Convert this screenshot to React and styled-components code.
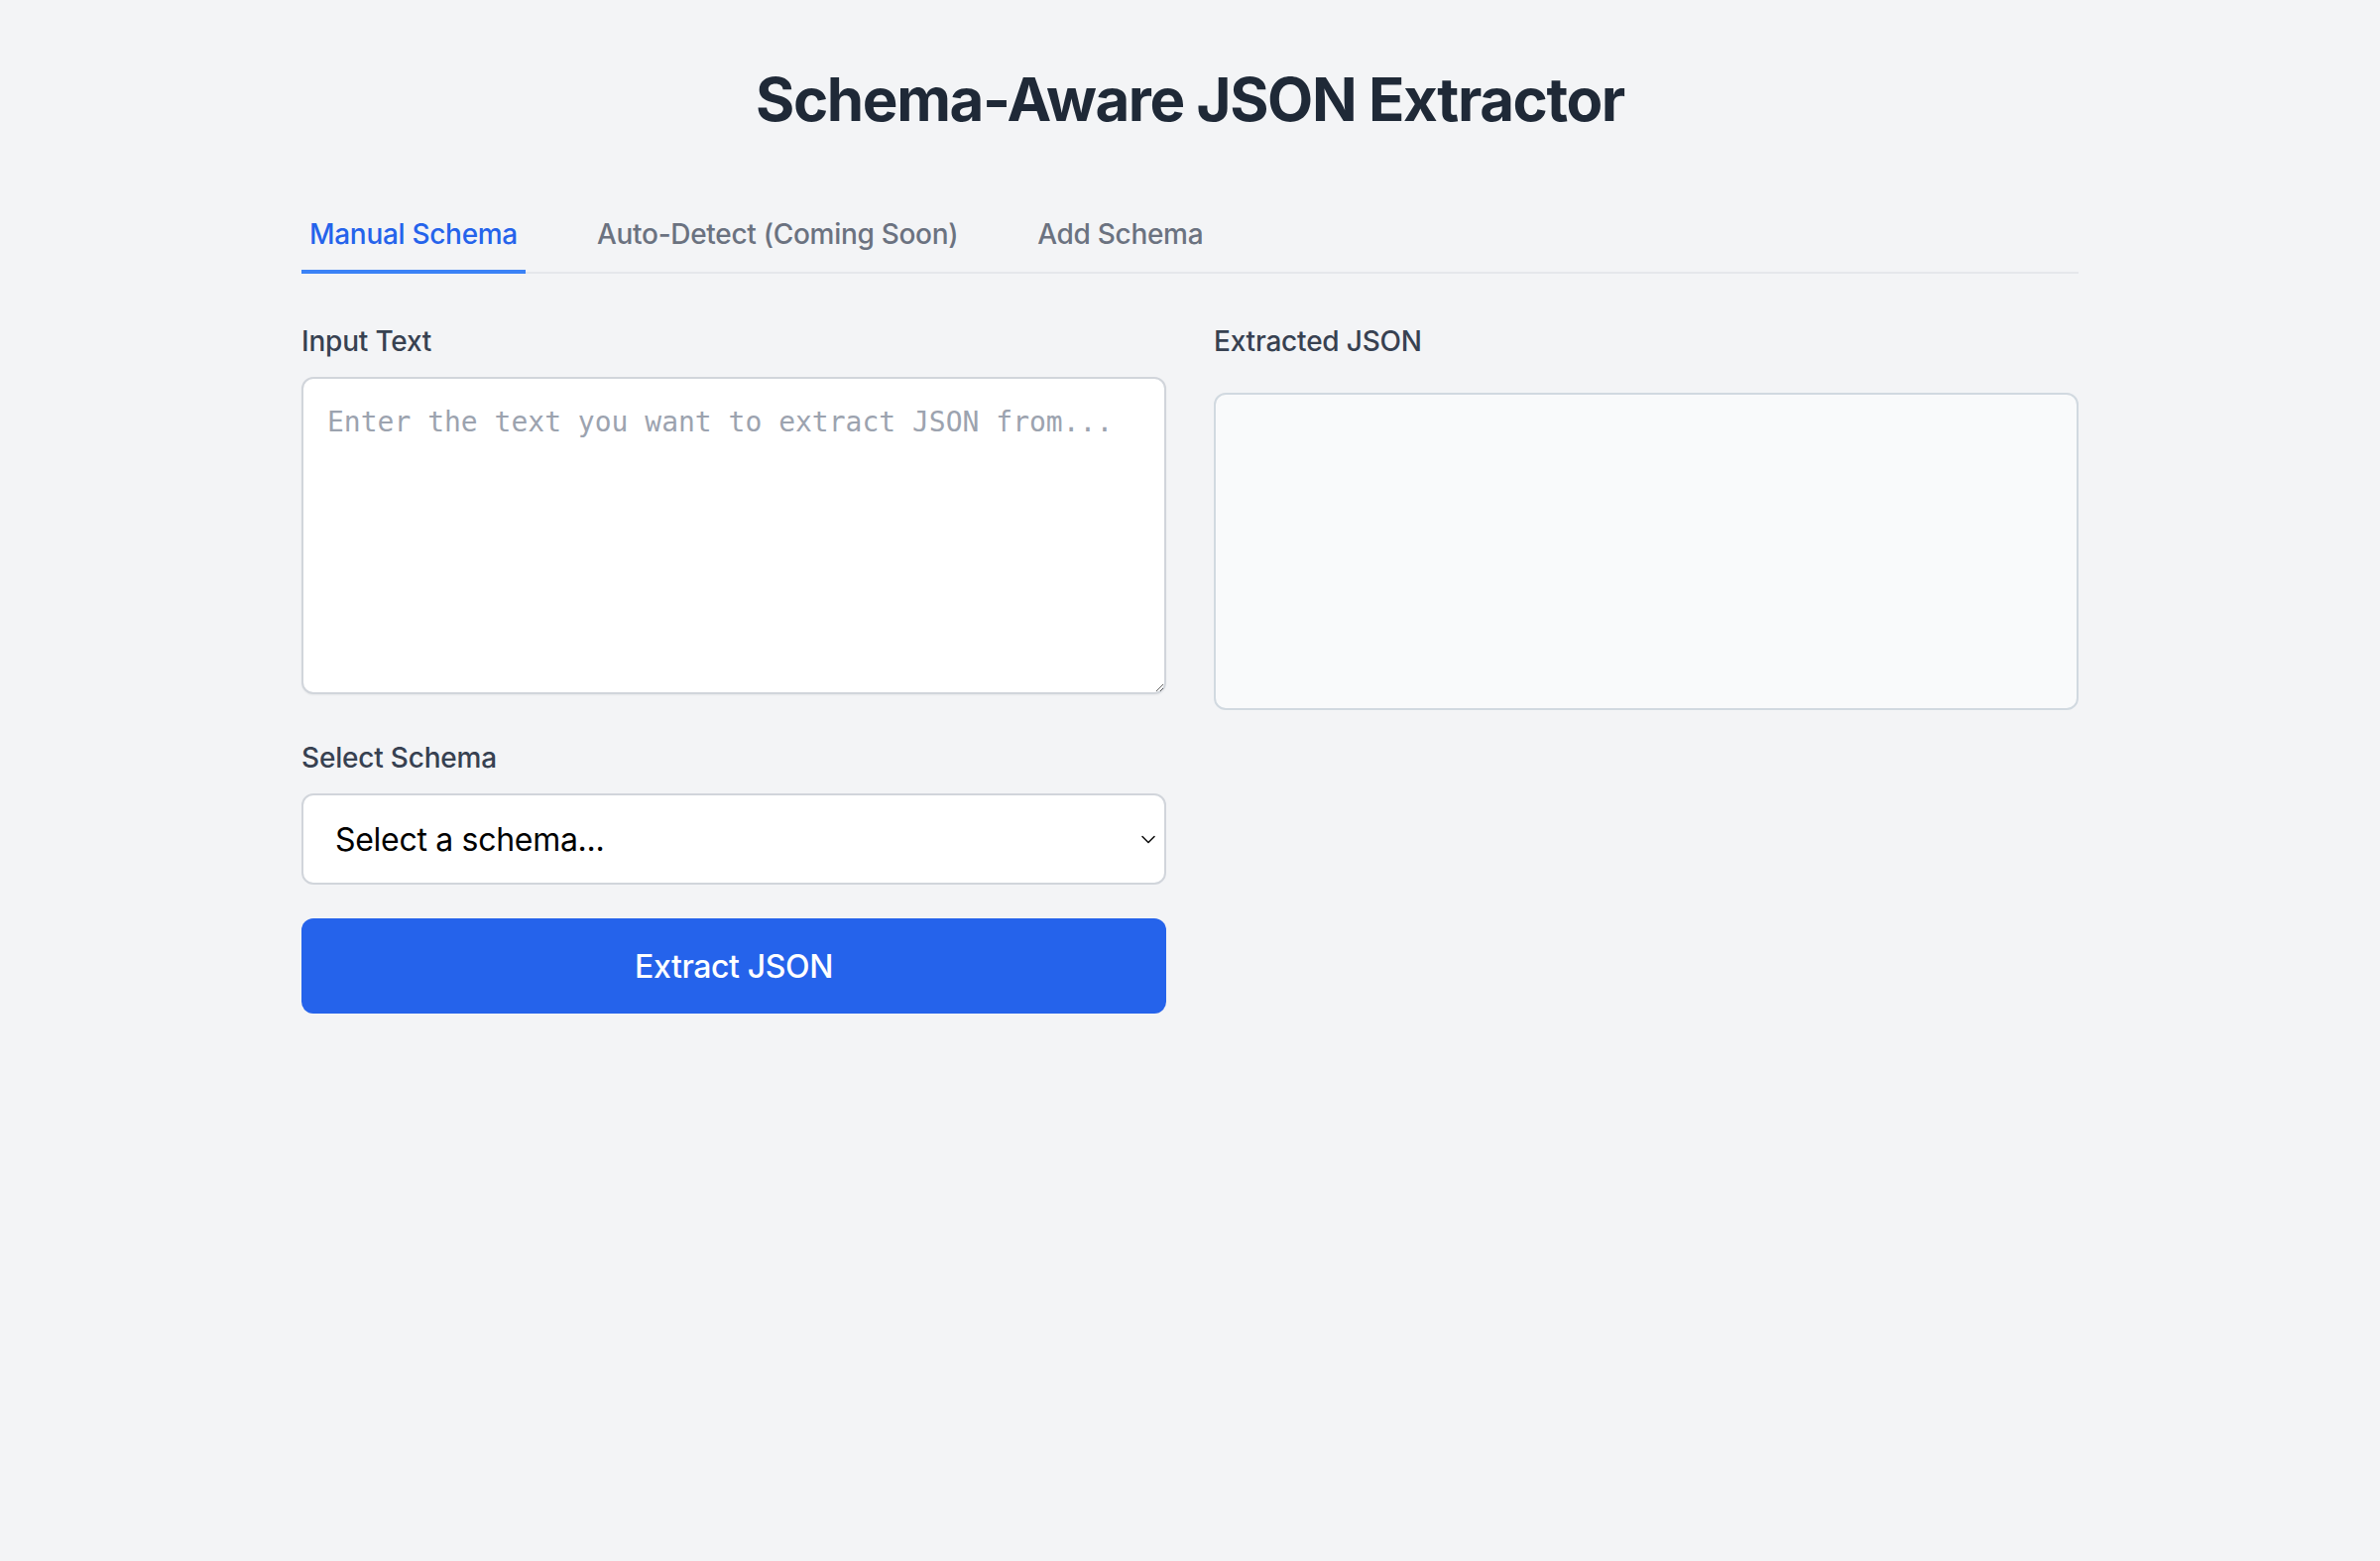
import React, { useState } from "react";
import styled, { createGlobalStyle } from "styled-components";

const GlobalStyle = createGlobalStyle`
    * {
        box-sizing: border-box;
    }
    html, body {
        margin: 0;
        padding: 0;
        background-color: #f3f4f6;
        font-family: Inter, "Noto Sans", "Liberation Sans", sans-serif;
    }
`;

const tabs = ["Manual Schema", "Auto-Detect (Coming Soon)", "Add Schema"];

const Chevron = () => (
    <svg width="16" height="11" viewBox="0 0 16 11" fill="none">
        <path
            d="M2 3 L8 9 L14 3"
            stroke="#111"
            strokeWidth="1.6"
            strokeLinecap="round"
            strokeLinejoin="round"
        />
    </svg>
);

const App = () => {
    const [active, setActive] = useState(0);
    const [text, setText] = useState("");
    const [schema, setSchema] = useState("");

    return (
        <>
            <GlobalStyle />
            <Page>
                <Title>Schema-Aware JSON Extractor</Title>

                <TabBar>
                    {tabs.map((t, i) => (
                        <Tab key={t} active={i === active} onClick={() => setActive(i)}>
                            {t}
                        </Tab>
                    ))}
                </TabBar>

                <Columns>
                    <Column>
                        <Label>Input Text</Label>
                        <TextArea
                            value={text}
                            onChange={(e) => setText(e.target.value)}
                            placeholder="Enter the text you want to extract JSON from..."
                        />

                        <Label spaced>Select Schema</Label>
                        <SelectWrap>
                            <Select value={schema} onChange={(e) => setSchema(e.target.value)}>
                                <option value="">Select a schema...</option>
                            </Select>
                            <ChevronBox>
                                <Chevron />
                            </ChevronBox>
                        </SelectWrap>

                        <ExtractButton>Extract JSON</ExtractButton>
                    </Column>

                    <Column>
                        <Label gap={32}>Extracted JSON</Label>
                        <Output />
                    </Column>
                </Columns>
            </Page>
        </>
    );
};

export default App;

const Page = styled.div`
    max-width: 1792px;
    margin: 0 auto;
    padding-top: 64px;
    min-height: 1574px;
`;

const Title = styled.h1`
    margin: 0 0 64px 0;
    text-align: center;
    font-size: 60px;
    line-height: 72px;
    font-weight: 700;
    color: #1f2937;
    letter-spacing: -1.4px;
`;

const TabBar = styled.div`
    display: flex;
    gap: 64px;
    border-bottom: 2px solid #e5e7eb;
`;

const Tab = styled.button`
    background: none;
    border: none;
    border-bottom: 4px solid ${(p) => (p.active ? "#3b82f6" : "transparent")};
    margin-bottom: -2px;
    padding: 16px 8px;
    font-family: inherit;
    font-size: 28px;
    line-height: 40px;
    font-weight: 500;
    letter-spacing: -0.3px;
    color: ${(p) => (p.active ? "#2563eb" : "#6b7280")};
    cursor: pointer;
`;

const Columns = styled.div`
    display: grid;
    grid-template-columns: 1fr 1fr;
    gap: 48px;
    margin-top: 48px;
    align-items: start;
`;

const Column = styled.div`
    display: flex;
    flex-direction: column;
`;

const Label = styled.label`
    display: block;
    font-size: 28px;
    line-height: 40px;
    font-weight: 500;
    letter-spacing: -0.2px;
    color: #374151;
    margin-top: ${(p) => (p.spaced ? "44px" : "0")};
    margin-bottom: ${(p) => (p.gap ? p.gap : 16)}px;
`;

const TextArea = styled.textarea`
    display: block;
    width: 100%;
    height: 320px;
    padding: 24px;
    border: 2px solid #d1d5db;
    border-radius: 12px;
    background: #fff;
    font-family: "DejaVu Sans Mono", "Liberation Mono", monospace;
    font-size: 28px;
    line-height: 40px;
    color: #111827;
    resize: vertical;
    outline: none;
    box-shadow: 0 1px 2px rgb(0 0 0 / 5%);
    &::placeholder {
        color: #9ca3af;
        opacity: 1;
    }
`;

const SelectWrap = styled.div`
    position: relative;
`;

const Select = styled.select`
    display: block;
    width: 100%;
    height: 92px;
    padding: 0 60px 0 32px;
    border: 2px solid #d1d5db;
    border-radius: 12px;
    background: #fff;
    appearance: none;
    font-family: inherit;
    font-size: 32px;
    letter-spacing: -0.3px;
    color: #000;
    outline: none;
`;

const ChevronBox = styled.span`
    position: absolute;
    right: 10px;
    top: 50%;
    transform: translateY(-50%);
    display: flex;
    pointer-events: none;
`;

const ExtractButton = styled.button`
    margin-top: 34px;
    width: 100%;
    height: 96px;
    border: none;
    border-radius: 12px;
    background-color: #2563eb;
    color: #fff;
    font-family: inherit;
    font-size: 32px;
    font-weight: 500;
    letter-spacing: -0.4px;
    cursor: pointer;
`;

const Output = styled.div`
    height: 320px;
    border: 2px solid #d1d9e0;
    border-radius: 12px;
    background-color: #f9fafb;
`;
